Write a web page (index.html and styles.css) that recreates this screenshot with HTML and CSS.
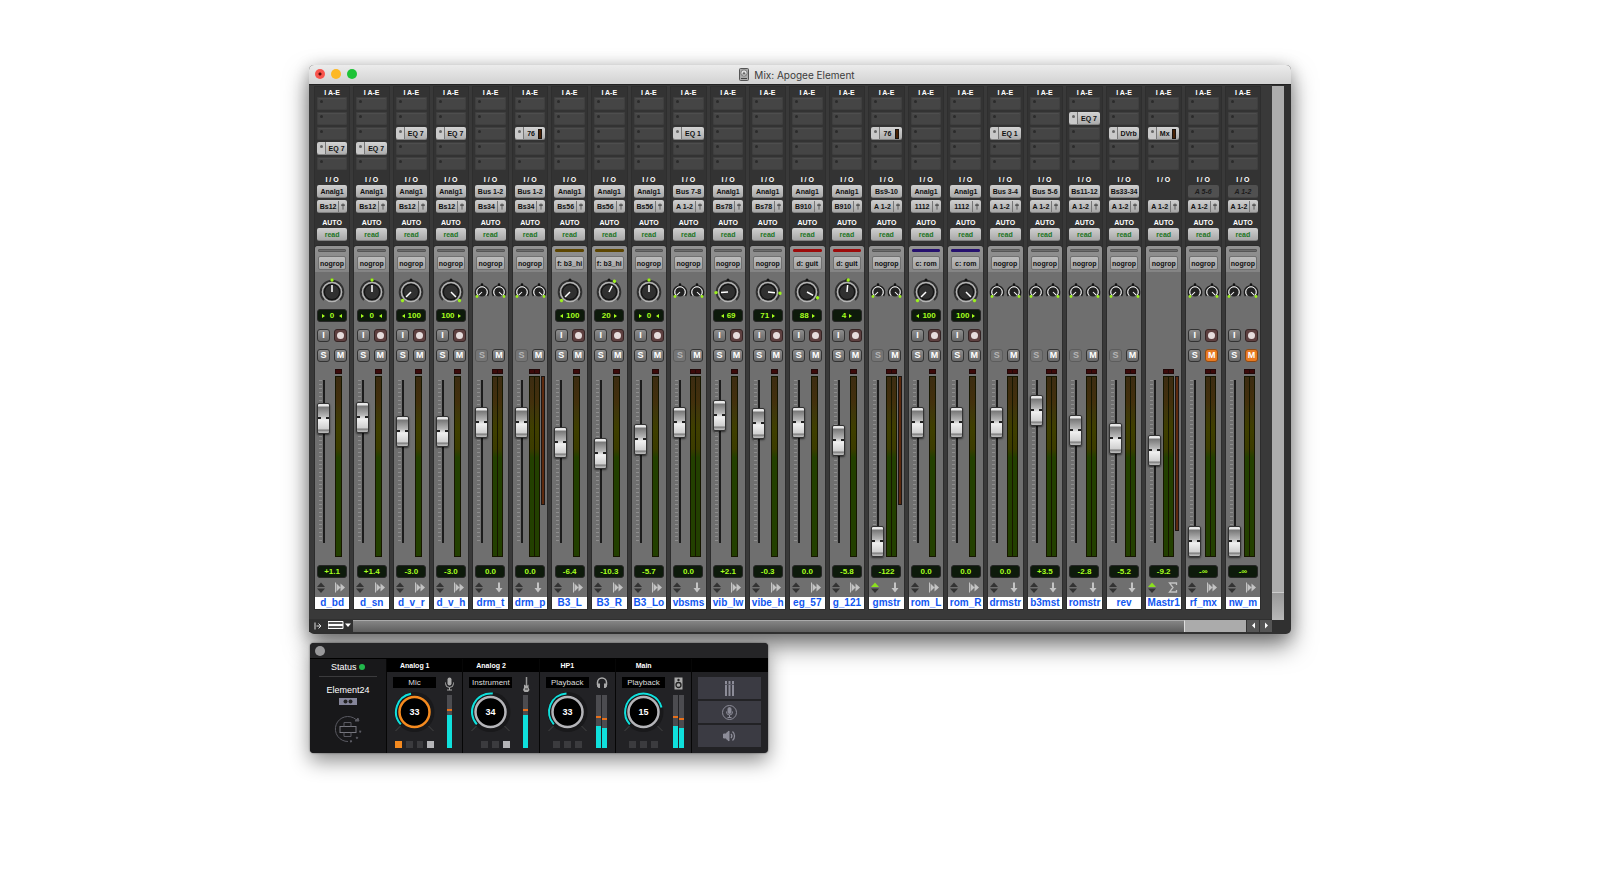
FILE: index.html
```html
<!DOCTYPE html>
<html lang="en">
<head>
    <meta charset="UTF-8">
    <meta name="viewport" content="width=device-width, initial-scale=1.0">
    <title>Mix: Apogee Element</title>
    <link rel="stylesheet" href="styles.css">
</head>
<body>
    <main class="desktop">
        <section class="mix-window">
            <header class="titlebar">
                <div class="lights">
                    <button class="light light-close" aria-label="Close"></button>
                    <button class="light light-min" aria-label="Minimize"></button>
                    <button class="light light-zoom" aria-label="Zoom"></button>
                </div>
                <h1 class="title">
                    <svg width="10" height="13" viewBox="0 0 10 13">
                        <rect x="0.5" y="0.5" width="9" height="12" rx="1" fill="#aaa" stroke="#555"/>
                        <circle cx="5" cy="5" r="3.2" fill="#e4e4e4" stroke="#777"/>
                        <path d="M3 6.500L5 3.500 7 6.500z" fill="#666"/>
                        <path d="M2 10.500h6" stroke="#444"/>
                    </svg>
                    Mix: Apogee Element
                </h1>
            </header>
            <div class="mix-body">
                <div class="mix-main">
                    <div class="strips" id="strips"></div>
                    <div class="mix-footer">
                        <button class="foot-btn" aria-label="Show tracks">
                            <svg width="8" height="8" viewBox="0 0 8 8"><path d="M1 0.500v7M2.500 4h4M4.500 1.500L7 4 4.500 6.500" fill="none" stroke="#ddd"/></svg>
                        </button>
                        <button class="foot-btn" aria-label="View">
                            <svg width="24" height="9" viewBox="0 0 24 9"><path d="M0 0.500h15v7H0z" fill="#555" stroke="#fff"/><path d="M0 4h15" stroke="#fff" stroke-width="2"/><path d="M17 2.500h6L20 6z" fill="#fff"/></svg>
                        </button>
                        <div class="hscroll">
                            <div class="hthumb"></div>
                        </div>
                        <button class="scroll-btn" aria-label="Scroll left">
                            <svg width="5" height="7" viewBox="0 0 5 7"><path d="M4 0.500v6L1 3.500z" fill="#fff"/></svg>
                        </button>
                        <button class="scroll-btn" aria-label="Scroll right">
                            <svg width="5" height="7" viewBox="0 0 5 7"><path d="M1 0.500v6L4 3.500z" fill="#fff"/></svg>
                        </button>
                    </div>
                </div>
                <div class="vscroll"><div class="vthumb"></div></div>
            </div>
        </section>

        <section class="element-window">
            <header class="el-titlebar"><button class="el-close" aria-label="Close"></button></header>
            <div class="el-grid" id="element">
                <div class="el-status">
                    <p class="status-line">Status <span class="status-dot"></span></p>
                    <p class="device">Element24</p>
                    <svg class="device-icon" width="18" height="7" viewBox="0 0 18 7">
                        <rect width="18" height="7" fill="#85859a"/>
                        <circle cx="6.500" cy="3.500" r="2" fill="#222"/><circle cx="11.500" cy="3.500" r="2" fill="#222"/>
                    </svg>
                    <svg class="sync-icon" width="28" height="28" viewBox="0 0 28 28" fill="none" stroke="#5a5a62">
                        <path d="M22 4.500A12.500 12.500 0 1 0 14 26.500"/>
                        <path d="M16 26.500A12.500 12.500 0 0 0 26 11" stroke-dasharray="2 5" stroke-width="2"/>
                        <path d="M21 6l4 0-1-3z" fill="#5a5a62"/>
                        <rect x="6" y="11.500" width="16" height="6" stroke="#77777f"/>
                        <path d="M10 11.500v-4h7v4M10 17.500v4h7v-4"/>
                    </svg>
                </div>
            </div>
        </section>
    </main>
    <script src="script.js"></script>
</body>
</html>
```
FILE: styles.css
```css
* {
    box-sizing: border-box;
}

body {
    margin: 0;
    background: #fff;
    font-family: "Liberation Sans", Arial, sans-serif;
}

button {
    font-family: inherit;
    padding: 0;
    border: none;
    cursor: pointer;
}

svg {
    display: block;
}

.desktop {
    width: 61.4%;
    margin: 0 auto;
    padding: 65px 0 40px;
}

/* Mix window */
.mix-window {
    background: #303030;
    border-radius: 5px;
    padding-bottom: 2px;
    box-shadow: 0 12px 24px rgba(0, 0, 0, 0.5), 0 2px 16px rgba(0, 0, 0, 0.22);
}

.titlebar {
    position: relative;
    display: flex;
    align-items: center;
    justify-content: center;
    height: 19px;
    border-radius: 5px 5px 0 0;
    background: linear-gradient(#ececec, #d2d2d2);
}

.lights {
    position: absolute;
    left: 6px;
    top: 4px;
    display: flex;
    gap: 6px;
}

.light {
    width: 10px;
    height: 10px;
    border-radius: 50%;
}

.light-close {
    background: radial-gradient(circle, #5c0d08 1px, #f8544d 2px);
}

.light-min {
    background: #fdb825;
}

.light-zoom {
    background: #1ec337;
}

.title {
    display: flex;
    align-items: center;
    gap: 5px;
    margin: 0;
    padding-right: 6px;
    font: 400 10px/16px Inter, sans-serif;
    color: #3c3c3c;
}

.mix-body {
    display: flex;
    padding-right: 7px;
    border-top: 1px solid #222;
}

.mix-main {
    flex: 1;
    min-width: 0;
}

.strips {
    display: grid;
    grid-template-columns: repeat(24, minmax(0, 1fr));
    gap: 5px;
    padding: 2px 12px 10px 6px;
    background: #393939;
}

/* Channel strip, upper part */
.strip {
    display: flex;
    flex-direction: column;
}

.strip-top {
    display: flex;
    flex-direction: column;
    padding: 0 2px 5px;
    background: #333;
    box-shadow: 0 0 0 1px #2e2e2e;
}

.label {
    height: 11px;
    font-size: 7px;
    line-height: 11px;
    font-weight: bold;
    text-align: center;
    color: #fff;
    white-space: nowrap;
}

.label-inserts {
    height: 10px;
}

.slots {
    display: grid;
    grid-template-rows: repeat(5, 1fr);
    gap: 2px;
    height: 73px;
    margin-bottom: 4px;
}

.slot,
.pill {
    display: flex;
    align-items: center;
    justify-content: center;
    width: 100%;
    font-size: 7px;
    font-weight: bold;
    color: #111;
    white-space: nowrap;
    border-radius: 2px;
}

.slot {
    justify-content: flex-start;
    background: #454545;
    box-shadow: inset 0 0 0 1px #3f3f3f, inset 0 2px 1px #4f4f4f;
}

.slot::before {
    content: "";
    width: 3px;
    height: 3px;
    margin: 0 3px 4px 3px;
    border-radius: 50%;
    background: #2b2b2b;
}

.slot-on {
    background: linear-gradient(90deg, #c9c9c9 8px, #777 8px, #777 9px, transparent 9px), linear-gradient(#d4d4d4, #a9a9a9);
    box-shadow: inset 0 -1px #858585;
}

.slot-on::before {
    background: #666;
}

.slot-name {
    flex: 1;
    text-align: center;
}

.slot-gr {
    width: 4px;
    height: 10px;
    margin-right: 3px;
    border: 1px solid #1a1410;
    background: #4a2206;
}

.pill {
    height: 13px;
    margin-bottom: 2px;
    background: linear-gradient(#d0d0d0, #a8a8a8);
    border-bottom: 1px solid #808080;
}

.pill-none {
    visibility: hidden;
}

.pill-off {
    background: #505050;
    border-color: #444;
    color: #1c1c1c;
    font-style: italic;
}

.pill-out {
    justify-content: space-between;
    padding-left: 1px;
    margin-bottom: 4px;
}

.pill-out svg {
    flex: none;
    border-left: 1px solid #777;
}

.out-name {
    flex: 1;
    text-align: center;
}

.pill-auto {
    margin: 0;
    color: #1b7423;
}

/* Channel strip, lower part */
.strip-bottom {
    background: #6f6f6f;
    border-radius: 3px 3px 0 0;
    box-shadow: 0 0 0 1px #2c2c2c;
}

.group {
    height: 26px;
    padding: 3px 3px 2px;
    background: linear-gradient(#929292, #848484);
    border-radius: 3px 3px 0 0;
}

.group-bar {
    height: 3px;
    margin-bottom: 4px;
    background: #6c6c6c;
    border: 1px solid #565656;
    border-radius: 1px;
}

.bar-gold {
    background: #5c4500;
    border-color: #5c4500;
}

.bar-red {
    background: #9c0a0a;
    border-color: #9c0a0a;
}

.bar-blue {
    background: #25106e;
    border-color: #25106e;
}

.group-btn {
    display: block;
    width: 100%;
    height: 14px;
    background: linear-gradient(#bdbdbd, #a2a2a2);
    border: 1px solid #707070;
    border-radius: 2px;
    font-size: 7px;
    line-height: 11px;
    font-weight: bold;
    color: #111;
    white-space: nowrap;
}

.pan {
    display: flex;
    flex-direction: column;
    align-items: center;
    height: 57px;
    padding-top: 5px;
}

.knob {
    flex: none;
}

.sends {
    display: flex;
    justify-content: center;
    gap: 1px;
    padding-top: 5px;
}

.readout {
    display: flex;
    align-items: center;
    justify-content: center;
    gap: 3px;
    width: 30px;
    height: 13px;
    margin: 0 auto;
    background: #0d1a0b;
    border: 1px solid #262626;
    border-radius: 3px;
    font-size: 8px;
    line-height: 11px;
    font-weight: bold;
    color: #a6ff1e;
}

.pan .readout {
    margin-top: 2px;
}

.readout-center {
    gap: 5px;
}

.tri-l,
.tri-r {
    border: 2px solid transparent;
}

.tri-l {
    border-left-width: 0;
    border-right: 3px solid #a6ff1e;
}

.tri-r {
    border-right-width: 0;
    border-left: 3px solid #a6ff1e;
}

.keys {
    display: flex;
    justify-content: center;
    gap: 4px;
    height: 13px;
    margin-bottom: 7px;
}

.key {
    display: flex;
    align-items: center;
    justify-content: center;
    width: 13px;
    height: 13px;
    background: linear-gradient(#8e8e8e, #686868);
    border: 1px solid #333;
    border-radius: 3px;
    font-size: 9px;
    line-height: 11px;
    font-weight: bold;
    color: #fff;
}

.key-rec {
    background: #5e4040;
    border-color: #352424;
}

.key-rec::before {
    content: "";
    width: 7px;
    height: 7px;
    border-radius: 50%;
    background: #e6dcdc;
}

.key-dim {
    background: #747474;
    border-color: #5c5c5c;
    color: #b4b4b4;
}

.key-muted {
    background: #e87a22;
    border-color: #8c4a14;
}

/* Fader and meters */
.level {
    display: flex;
    justify-content: space-between;
    height: 196px;
    padding: 0 7px 8px 2px;
}

.level-stereo {
    padding-right: 5px;
}

.level-gr {
    padding-right: 2px;
}

.fader {
    appearance: none;
    writing-mode: vertical-lr;
    direction: rtl;
    width: 13px;
    height: 182px;
    margin: 7px 0 0;
    background:
        linear-gradient(#1c1c1c, #1c1c1c) 6px 4px / 2px 163px no-repeat,
        repeating-linear-gradient(#8e8e8e 0 1px, transparent 1px 4px) 2px 4px / 3px 163px no-repeat;
}

.fader::-webkit-slider-thumb {
    appearance: none;
    width: 13px;
    height: 31px;
    border: 1px solid #333;
    border-radius: 2px;
    background:
        linear-gradient(90deg, #222 3px, transparent 3px 8px, #222 8px) 0 13px / 100% 2px no-repeat,
        linear-gradient(#e8e8e8 0 2px, #777 3px, #b4b4b4 12px, #d4d4d4 14px, #f0f0f0 16px, #cfcfcf 25px, #777 26px, #b8b8b8 28px);
    box-shadow: 0 1px 2px rgba(0, 0, 0, 0.6);
}

.meters {
    display: flex;
    gap: 1px;
    height: 188px;
}

.meter-pair {
    display: flex;
}

.meter {
    display: flex;
    flex-direction: column;
    gap: 2px;
    width: 7px;
}

.meter-pair .meter {
    width: 6px;
}

.meter-pair .meter + .meter {
    margin-left: -1px;
}

.clip {
    height: 5px;
    background: #3c0a0a;
    border: 1px solid #210808;
}

.bar {
    flex: 1;
    border: 1px solid #161600;
    background: linear-gradient(#3c2c12, #43300c 14%, #40380a 20%, #3f3f00 28%, #3c3c00 40%, #234000 45%, #234000);
}

.gr {
    width: 4px;
    height: 129px;
    margin-top: 7px;
    border: 1px solid #1c1614;
    background: #5e2a0e;
}

.gr-long {
    height: 155px;
}

.tools {
    display: flex;
    align-items: center;
    justify-content: space-between;
    height: 19px;
    padding: 0 3px 0 2px;
}

.name {
    display: block;
    width: 100%;
    height: 12px;
    background: #fff;
    font-size: 10px;
    line-height: 12px;
    font-weight: bold;
    text-align: center;
    color: #1257f0;
}

/* Scroll bars */
.mix-footer {
    display: flex;
    align-items: center;
    height: 13px;
    padding-left: 5px;
    background: #303030;
}

.foot-btn {
    margin-right: 6px;
    background: none;
}

.foot-btn + .foot-btn {
    margin-right: 1px;
}

.hscroll {
    flex: 1;
    height: 12px;
    background: #ababab;
}

.hthumb {
    width: 93.2%;
    height: 12px;
    background: linear-gradient(#858585, #5e5e5e);
    border-top: 1px solid #aaa;
    border-right: 1px solid #ddd;
}

.scroll-btn {
    display: flex;
    align-items: center;
    justify-content: center;
    width: 13px;
    height: 12px;
    background: #555;
    border-left: 1px solid #333;
}

.vscroll {
    display: flex;
    align-items: flex-end;
    width: 12px;
    margin: 1px 0 12px;
    background: #adadad;
}

.vthumb {
    width: 12px;
    height: 28px;
    background: linear-gradient(#999, #b8b8b8);
    border-top: 1px solid #ccc;
}

/* Element control window */
.element-window {
    width: 46.6%;
    margin: 9px 0 0 1px;
    overflow: hidden;
    background: #222225;
    border-radius: 4px;
    box-shadow: 0 8px 20px rgba(0, 0, 0, 0.45), 0 0 2px rgba(0, 0, 0, 0.6);
}

.el-titlebar {
    display: flex;
    align-items: center;
    height: 15px;
    padding-left: 5px;
    background: #252527;
}

.el-close {
    width: 10px;
    height: 10px;
    border-radius: 50%;
    background: #98989a;
}

.el-grid {
    display: grid;
    grid-template-columns: repeat(6, minmax(0, 1fr));
    border-top: 1px solid #000;
}

.el-status {
    display: flex;
    flex-direction: column;
    align-items: center;
    padding: 1px 9px 0;
    background: #18181a;
    font-size: 9px;
    line-height: 14px;
    color: #fff;
}

.status-line,
.device {
    width: 100%;
    margin: 0;
    text-align: center;
}

.status-line {
    height: 17px;
    border-bottom: 1px solid #3b3b3d;
}

.status-dot {
    display: inline-block;
    width: 6px;
    height: 6px;
    border-radius: 50%;
    background: #22b84c;
}

.device {
    padding-top: 6px;
}

.device-icon {
    margin-top: 1px;
}

.sync-icon {
    margin-top: 10px;
}

.el-col {
    border-left: 1px solid #060606;
}

.el-head {
    height: 13px;
    margin: 0;
    padding-right: 20px;
    background: #000;
    font-size: 7px;
    line-height: 13px;
    font-weight: bold;
    text-align: center;
    color: #fff;
}

.el-body {
    display: grid;
    grid-template-columns: 43px 1fr;
    grid-template-rows: 11px 53px 7px;
    column-gap: 5px;
    padding: 5px 5px 5px 6px;
}

.el-source {
    height: 11px;
    background: #000;
    font-size: 8px;
    line-height: 11px;
    color: #ddd;
}

.el-icon {
    justify-self: center;
}

.el-dial {
    grid-column: 1;
    margin-top: 1px;
}

.el-dial text {
    font-size: 9px;
    font-weight: bold;
    text-anchor: middle;
    fill: #fff;
}

.el-flags {
    display: flex;
    justify-content: center;
    gap: 4px;
    padding: 0 2px;
}

.flags-end {
    justify-content: flex-end;
}

.flag {
    width: 7px;
    height: 7px;
    background: #3b3b3e;
}

.flag-orange {
    background: #f58a1f;
}

.flag-light {
    background: #b5b5b8;
}

.el-meters {
    display: flex;
    justify-content: center;
    gap: 1px;
    grid-column: 2;
    grid-row: 2 / span 2;
    margin-top: 7px;
}

.el-meter {
    display: flex;
    flex-direction: column;
    justify-content: flex-end;
    width: 5px;
    background: #4c4c50;
}

.el-peak {
    height: 2px;
    background: #e8701a;
}

.el-gap {
    height: 4px;
}

.el-gap-wide {
    height: 8px;
}

.el-fill {
    background: #0fe0dc;
}

.el-side {
    display: grid;
    gap: 2px;
    padding: 5px 7px 5px 6px;
}

.el-btn {
    display: flex;
    align-items: center;
    justify-content: center;
    height: 22px;
    background: #3b3b43;
}
```
FILE: script.js
```javascript
// ins: [slot index, plugin name, has gain reduction meter]
// pan: number for a mono channel, null for an aux with two small knobs
const strips = [
    { name: 'd_bd', ins: [3, 'EQ 7'], input: 'Analg1', out: 'Bs12', pan: 0, vol: '+1.1', fader: 124 },
    { name: 'd_sn', ins: [3, 'EQ 7'], input: 'Analg1', out: 'Bs12', pan: 0, vol: '+1.4', fader: 125 },
    { name: 'd_v_r', ins: [2, 'EQ 7'], input: 'Analg1', out: 'Bs12', pan: -100, vol: '-3.0', fader: 111 },
    { name: 'd_v_h', ins: [2, 'EQ 7'], input: 'Analg1', out: 'Bs12', pan: 100, vol: '-3.0', fader: 111 },
    { name: 'drm_t', input: 'Bus 1-2', out: 'Bs34', pan: null, vol: '0.0', fader: 120 },
    { name: 'drm_p', ins: [2, '76', true], input: 'Bus 1-2', out: 'Bs34', pan: null, vol: '0.0', fader: 120, gr: 'gr' },
    { name: 'B3_L', input: 'Analg1', out: 'Bs56', pan: -100, vol: '-6.4', fader: 100, group: 'f: b3_hi', color: 'gold' },
    { name: 'B3_R', input: 'Analg1', out: 'Bs56', pan: 20, vol: '-10.3', fader: 89, group: 'f: b3_hi', color: 'gold' },
    { name: 'B3_Lo', input: 'Analg1', out: 'Bs56', pan: 0, vol: '-5.7', fader: 103 },
    { name: 'vbsms', ins: [2, 'EQ 1'], input: 'Bus 7-8', out: 'A 1-2', pan: null, vol: '0.0', fader: 120 },
    { name: 'vib_lw', input: 'Analg1', out: 'Bs78', pan: -69, vol: '+2.1', fader: 127 },
    { name: 'vibe_h', input: 'Analg1', out: 'Bs78', pan: 71, vol: '-0.3', fader: 119 },
    { name: 'eg_57', input: 'Analg1', out: 'B910', pan: 88, vol: '0.0', fader: 120, group: 'd: guit', color: 'red' },
    { name: 'g_121', input: 'Analg1', out: 'B910', pan: 4, vol: '-5.8', fader: 102, group: 'd: guit', color: 'red' },
    { name: 'gmstr', ins: [2, '76', true], input: 'Bs9-10', out: 'A 1-2', pan: null, vol: '-122', fader: 1, gr: 'gr', armed: true },
    { name: 'rom_L', input: 'Analg1', out: '1112', pan: -100, vol: '0.0', fader: 120, group: 'c: rom', color: 'blue' },
    { name: 'rom_R', input: 'Analg1', out: '1112', pan: 100, vol: '0.0', fader: 120, group: 'c: rom', color: 'blue' },
    { name: 'drmstr', ins: [2, 'EQ 1'], input: 'Bus 3-4', out: 'A 1-2', pan: null, vol: '0.0', fader: 120 },
    { name: 'b3mst', input: 'Bus 5-6', out: 'A 1-2', pan: null, vol: '+3.5', fader: 132 },
    { name: 'romstr', ins: [1, 'EQ 7'], input: 'Bs11-12', out: 'A 1-2', pan: null, vol: '-2.8', fader: 112 },
    { name: 'rev', ins: [2, 'DVrb'], input: 'Bs33-34', out: 'A 1-2', pan: null, vol: '-5.2', fader: 104 },
    { name: 'Mastr1', ins: [2, 'Mx', true], out: 'A 1-2', pan: null, vol: '-9.2', fader: 92, gr: 'gr gr-long', armed: true, type: 'master' },
    { name: 'rf_mx', input: 'A 5-6', off: true, out: 'A 1-2', pan: null, vol: '-∞', fader: 1, type: 'stereo' },
    { name: 'nw_m', input: 'A 1-2', off: true, out: 'A 1-2', pan: null, vol: '-∞', fader: 1, type: 'stereo' }
];

function slots(ins) {
    let html = '';
    for (let i = 0; i < 5; i++) {
        if (ins && ins[0] === i) {
            html += `<button class="slot slot-on"><span class="slot-name">${ins[1]}</span>${ins[2] ? '<span class="slot-gr"></span>' : ''}</button>`;
        } else {
            html += `<button class="slot" aria-label="Insert ${i + 1}"></button>`;
        }
    }
    return html;
}

function bigKnob(pan) {
    const angle = pan * 1.35;
    return `<svg class="knob" width="30" height="30" viewBox="-15 -15 30 30">
        <path d="M-8 8A11.300 11.300 0 1 1 8 8" fill="none" stroke="#303030" stroke-width="2"/>
        <circle cy="-12" r="1.500" fill="#111"/>
        <circle r="9.500" fill="#222" stroke="#b4b4b4" stroke-width="1.500"/>
        <circle r="7.500" fill="#303030" stroke="#111"/>
        <g transform="rotate(${angle})">
            <path d="M0 0V-7" stroke="#fff" stroke-width="1.500"/>
            <circle cy="-12" r="1.700" fill="#9cf01e"/>
        </g>
    </svg>`;
}

function smallKnob(angle) {
    return `<svg class="knob" width="16" height="20" viewBox="-8 -10 16 20">
        <path d="M-5.500 4A6.600 6.600 0 1 1 5.500 4" fill="none" stroke="#1c1c1c" stroke-width="1.500"/>
        <circle cy="-7.500" r="1.300" fill="#111"/>
        <circle r="4.500" fill="#222"/>
        <path d="M-4 3.500A5.300 5.300 0 1 1 4 3.500" fill="none" stroke="#eee"/>
        <path d="M0 0V-4.500" stroke="#fff" transform="rotate(${angle})"/>
        <circle cx="${angle < 0 ? -5 : 5}" cy="4.500" r="1.400" fill="#9cf01e"/>
    </svg>`;
}

function panReadout(pan) {
    const left = '<span class="tri-l"></span>';
    const right = '<span class="tri-r"></span>';
    let text = Math.abs(pan);
    if (pan === 0) {
        text = `${right}<span>0</span>${left}`;
    } else if (pan < 0) {
        text = `${left}<span>${text}</span>`;
    } else {
        text = `<span>${text}</span>${right}`;
    }
    return `<div class="readout ${pan === 0 ? 'readout-center' : ''}">${text}</div>`;
}

function panSection(s) {
    if (s.type === 'master') return '';
    if (s.pan === null) return `<div class="sends">${smallKnob(-135)}${smallKnob(135)}</div>`;
    return bigKnob(s.pan) + panReadout(s.pan);
}

function meters(s) {
    const one = '<div class="meter"><div class="clip"></div><div class="bar"></div></div>';
    if (s.pan !== null) return one;
    return `<div class="meter-pair">${one}${one}</div>` + (s.gr ? `<div class="${s.gr}"></div>` : '');
}

function typeIcon(s) {
    if (s.type === 'master') {
        return '<svg width="10" height="11" viewBox="0 0 10 11"><path d="M8.500 3V1H1.500L5 5.500 1.500 10h7V8" fill="none" stroke="#c4c4c4" stroke-width="1.300"/></svg>';
    }
    if (s.pan === null && s.type !== 'stereo') {
        return '<svg width="12" height="11" viewBox="0 0 12 11"><path d="M5 0.500h2V6h2.500L6 10.500 2.500 6H5z" fill="#c4c4c4"/></svg>';
    }
    return '<svg width="12" height="11" viewBox="0 0 12 11"><path d="M1.500 0.500v10" stroke="#c4c4c4"/><path d="M2.500 1.500l4 4-4 4zM6.500 1.500l4.500 4-4.500 4z" fill="#c4c4c4"/></svg>';
}

function stripHtml(s) {
    const aux = s.pan === null && !s.type;
    const inputKeys = s.pan !== null || s.type === 'stereo';
    const level = s.gr ? 'level level-gr' : s.pan === null ? 'level level-stereo' : 'level';
    return `<div class="strip">
        <div class="strip-top">
            <div class="label label-inserts">I A-E</div>
            <div class="slots">${slots(s.ins)}</div>
            <div class="label">I / O</div>
            <button class="pill ${s.off ? 'pill-off' : ''} ${s.input ? '' : 'pill-none'}">${s.input || ''}</button>
            <button class="pill pill-out"><span class="out-name">${s.out}</span>
                <svg width="9" height="11" viewBox="0 0 9 11"><path d="M4.500 2v7" stroke="#555"/><path d="M2.500 4h4" stroke="#555" stroke-width="2"/></svg>
            </button>
            <div class="label">AUTO</div>
            <button class="pill pill-auto">read</button>
        </div>
        <div class="strip-bottom">
            <div class="group">
                <div class="group-bar ${s.color ? 'bar-' + s.color : ''}"></div>
                <button class="group-btn">${s.group || 'nogrop'}</button>
            </div>
            <div class="pan">${panSection(s)}</div>
            <div class="keys">${inputKeys ? '<button class="key">I</button><button class="key key-rec" aria-label="Record"></button>' : ''}</div>
            <div class="keys">${s.type === 'master' ? '' : `<button class="key ${aux ? 'key-dim' : ''}">S</button><button class="key ${s.off ? 'key-muted' : ''}">M</button>`}</div>
            <div class="${level}">
                <input class="fader" type="range" min="0" max="151" value="${s.fader}" aria-label="${s.name} volume">
                <div class="meters">${meters(s)}</div>
            </div>
            <div class="readout">${s.vol}</div>
            <div class="tools">
                <svg width="8" height="11" viewBox="0 0 8 11"><path d="M0 5L4 0.500 8 5z" fill="${s.armed ? '#8be01e' : '#333'}"/><path d="M0 6.500h8L4 11z" fill="#333"/></svg>
                ${typeIcon(s)}
            </div>
            <button class="name">${s.name}</button>
        </div>
    </div>`;
}

document.getElementById('strips').innerHTML = strips.map(stripHtml).join('');

// Element control window
const icons = {
    mic: '<svg class="el-icon" width="11" height="14" viewBox="0 0 11 14"><rect x="3.500" y="0.500" width="4" height="8" rx="2" fill="#aaa"/><path d="M1.500 5.500v1a4 4 0 0 0 8 0v-1M5.500 10.500v2.500M3 13h5" fill="none" stroke="#aaa"/></svg>',
    guitar: '<svg class="el-icon" width="8" height="15" viewBox="0 0 8 15"><path d="M4.500 0v9" stroke="#999" stroke-width="1.500"/><path d="M2 7.500l1.500 1h2l1-1v3l1 2.500-1.500 2H2.500L1 13l1-2.500z" fill="#aaa"/><path d="M3 12h3" stroke="#333"/></svg>',
    phones: '<svg class="el-icon" width="12" height="12" viewBox="0 0 12 12"><path d="M1.500 8V5.500a4.500 4.500 0 0 1 9 0V8" fill="none" stroke="#aaa" stroke-width="1.500"/><path d="M1 6.500h3V11H2.500L1 9.500zM11 6.500H8V11h1.500L11 9.500z" fill="#aaa"/></svg>',
    speaker: '<svg class="el-icon" width="9" height="13" viewBox="0 0 9 13"><rect x="0.500" y="0.500" width="8" height="12" fill="#aaa"/><circle cx="4.500" cy="3" r="1.200" fill="#222"/><circle cx="4.500" cy="8" r="2.500" fill="none" stroke="#222" stroke-width="1.300"/></svg>'
};

const channels = [
    { title: 'Analog 1', source: 'Mic', icon: 'mic', gain: 33, ring: '#f58a1f', end: -11, flags: ['orange', '', '', 'light'], meters: [63] },
    { title: 'Analog 2', source: 'Instrument', icon: 'guitar', gain: 34, ring: '#b4b4b8', end: 7, flags: ['', '', 'light'], meters: [63] },
    { title: 'HP1', source: 'Playback', icon: 'phones', gain: 33, ring: '#b4b4b8', end: -3, flags: ['', '', ''], meters: [41, 38] },
    { title: 'Main', source: 'Playback', icon: 'speaker', gain: 15, ring: '#b4b4b8', end: 76, flags: ['', '', ''], meters: [41, 38] }
];

function dial(c) {
    const point = a => {
        const rad = a * Math.PI / 180;
        return (18.5 * Math.sin(rad)).toFixed(1) + ' ' + (-18.5 * Math.cos(rad)).toFixed(1);
    };
    return `<svg class="el-dial" width="43" height="50" viewBox="-21.500 -23 43 50">
        <circle r="20" fill="#19191b"/>
        <path d="M-14 14l-5 5M14 14l5 5" stroke="#444"/>
        <path d="M${point(-132)}A18.500 18.500 0 ${c.end + 132 > 180 ? 1 : 0} 1 ${point(c.end)}" fill="none" stroke="#0fe0dc" stroke-width="2"/>
        <circle r="15" fill="#000" stroke="${c.ring}" stroke-width="2.500"/>
        <text y="3">${c.gain}</text>
    </svg>`;
}

function channelHtml(c) {
    const single = c.meters.length === 1;
    return `<div class="el-col">
        <h2 class="el-head">${c.title}</h2>
        <div class="el-body">
            <button class="el-source">${c.source}</button>
            ${icons[c.icon]}
            ${dial(c)}
            <div class="el-flags ${single ? 'flags-end' : ''}">${c.flags.map(f => `<span class="flag ${f ? 'flag-' + f : ''}"></span>`).join('')}</div>
            <div class="el-meters">${c.meters.map(m => `<div class="el-meter"><div class="el-peak"></div><div class="el-gap ${single ? '' : 'el-gap-wide'}"></div><div class="el-fill" style="height: ${m}%"></div></div>`).join('')}</div>
        </div>
    </div>`;
}

const side = `<div class="el-col">
    <div class="el-head"></div>
    <div class="el-side">
        <button class="el-btn" aria-label="Mixer"><svg width="9" height="15" viewBox="0 0 9 15"><path d="M1 0v15M4.500 0v15M8 0v15" stroke="#8c8c98" stroke-width="2"/><path d="M0 3.500h9" stroke="#555560"/></svg></button>
        <button class="el-btn" aria-label="Talkback"><svg width="15" height="15" viewBox="0 0 15 15" fill="none" stroke="#8c8c98"><circle cx="7.500" cy="7.500" r="7"/><rect x="6" y="2.500" width="3" height="6" rx="1.500" fill="#8c8c98"/><path d="M4.500 6.500v.5a3 3 0 0 0 6 0v-.5M7.500 10v2.500M5.500 12.500h4"/></svg></button>
        <button class="el-btn" aria-label="Monitor"><svg width="13" height="12" viewBox="0 0 13 12" fill="none" stroke="#8c8c98"><path d="M0.500 4h2L6 1v10L2.500 8h-2z" fill="#8c8c98"/><path d="M8 4a3 3 0 0 1 0 4M9.500 1.500a6 6 0 0 1 0 9" stroke-width="1.300"/></svg></button>
    </div>
</div>`;

document.getElementById('element').insertAdjacentHTML('beforeend', channels.map(channelHtml).join('') + side);
```
